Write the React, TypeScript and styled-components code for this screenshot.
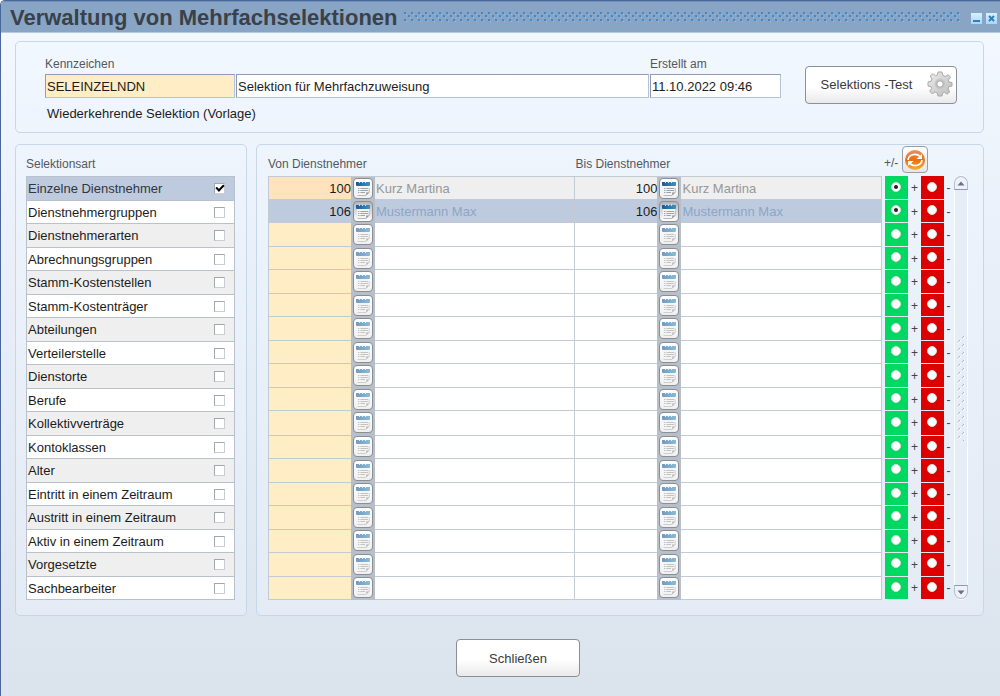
import React, { useState } from "react";
import styled, { createGlobalStyle, css } from "styled-components";

const GlobalStyle = createGlobalStyle`
  *, *::before, *::after { box-sizing: border-box; }
  html, body { margin: 0; padding: 0; }
  body, button, input { font-family: "Liberation Sans", Arial, sans-serif; font-size: 13px; }
  body { color: #1c1c1c; }
`;

const Window = styled.div`
  min-height: 100vh;
  display: flex;
  flex-direction: column;
  border-top: 1px solid #48689a;
  border-left: 1px solid #48689a;
  border-top-left-radius: 5px;
  background: linear-gradient(to bottom, #f3f8ff 32px, #eaf1fa 220px, #dde5ef 620px, #dbe3ed 100%);
`;

const TitleBar = styled.header`
  height: 32px;
  display: flex;
  align-items: center;
  padding: 2px 3px 0 9px;
  background: #89a5c5;
  border-top: 1px solid #7391b8;
  border-bottom: 1px solid #b4c9e2;
  border-top-left-radius: 4px;
`;

const Title = styled.h1`
  margin: 0;
  font-size: 22px;
  line-height: 28px;
  font-weight: bold;
  color: #3a4148;
  white-space: nowrap;
`;

const Grip = styled.svg`
  flex: 1;
  min-width: 0;
  height: 12px;
  margin: 0 6px;
`;

const WindowButton = styled.button`
  width: 11px;
  height: 11px;
  padding: 0;
  margin-left: 4px;
  border: 0;
  background: linear-gradient(#d9effc, #a9d7f3);
  display: flex;
  flex: none;
`;

const Content = styled.main`
  padding: 8px 16px 20px 14px;
  display: grid;
  grid-template-columns: 232px minmax(0, 1fr);
  column-gap: 9px;
  row-gap: 11px;
`;

const Panel = styled.section`
  border: 1px solid #c6d7ea;
  border-radius: 5px;
  background: rgba(240, 247, 255, 0.35);
`;

const HeadPanel = styled(Panel)`
  grid-column: 1 / -1;
  display: flex;
  align-items: flex-start;
  padding: 14px 26px 10px 29px;
`;

const Fields = styled.div`
  flex: 1;
  min-width: 0;
`;

const FieldRow = styled.div`
  display: grid;
  grid-template-columns: 190px minmax(0, 1fr) 131px;
  column-gap: 1px;
  row-gap: 2px;
`;

const Label = styled.label`
  font-size: 12px;
  line-height: 16px;
  color: #54585e;
`;

const TextInput = styled.input<{ $key?: boolean }>`
  grid-row: 2;
  width: 100%;
  height: 24px;
  padding: 0 1px;
  border: 1px solid #b3c3dc;
  border-top-color: #8f9cb2;
  border-left-color: #8f9cb2;
  outline: none;
  color: #1c1c1c;
  background: ${(p) => (p.$key ? "#ffedc6" : "#fff")};
`;

const Note = styled.p`
  margin: 8px 0 0 2px;
  line-height: 16px;
`;

const PushButton = styled.button<{ $w: number }>`
  width: ${(p) => p.$w}px;
  height: 38px;
  padding: 0;
  display: flex;
  align-items: center;
  justify-content: center;
  gap: 15px;
  border: 1px solid #8c8f94;
  border-radius: 4px;
  color: #3a3a3a;
  background: linear-gradient(#fff 55%, #e9e9e9);
`;

const TestButton = styled(PushButton)`
  flex: none;
  margin: 10px 0 0 24px;
  padding: 0 0 2px 12px;
`;

const Side = styled(Panel)`
  padding: 11px 11px 15px 10px;
`;

const Caption = styled.h2`
  margin: 0 0 4px;
  font-size: 12px;
  line-height: 16px;
  font-weight: normal;
  color: #54585e;
`;

const List = styled.ul`
  margin: 0;
  padding: 0;
  list-style: none;
  border: 1px solid #b9c2cc;
  border-bottom: 0;
`;

const Item = styled.li<{ $on: boolean }>`
  height: 24px;
  border-bottom: 1px solid #b9c2cc;
  background: ${(p) => (p.$on ? "#becbde" : "#fff")};
  color: ${(p) => (p.$on ? "#33373d" : "#1c1c1c")};
  &:nth-child(even) { height: 23px; }
  &:nth-child(odd) { ${(p) => !p.$on && css`background: #efefef;`} }
`;

const ItemLabel = styled.label`
  height: 100%;
  display: flex;
  align-items: center;
  justify-content: space-between;
  padding: 0 9px 0 1px;
`;

const Check = styled.input`
  appearance: none;
  width: 11px;
  height: 11px;
  margin: 0;
  border: 1px solid #c9ced6;
  border-top-color: #a3a8b0;
  border-left-color: #a3a8b0;
  background: #fff;
  display: grid;
  place-items: center;
  &:checked::before {
    content: "";
    width: 8px;
    height: 5px;
    border: solid #000;
    border-width: 0 0 2px 2px;
    transform: rotate(-45deg) translate(1px, -1px);
  }
`;

const Main = styled(Panel)`
  display: flex;
  padding: 1px 15px 15px 11px;
`;

const Grid = styled.table`
  flex: 1;
  width: 0;
  table-layout: fixed;
  border-collapse: separate;
  border-spacing: 0;
  td, th { padding: 0; }
`;

const HeadCell = styled.th`
  height: 30px;
  text-align: left;
  vertical-align: bottom;
  font-size: 12px;
  line-height: 16px;
  font-weight: normal;
  color: #54585e;
  white-space: nowrap;
`;

const HeadText = styled.span`
  display: block;
  margin-bottom: 4px;
`;

const HeadTools = styled.div`
  display: flex;
  align-items: flex-end;
  gap: 4px;
  padding: 0 0 3px 2px;
`;

const ToolsText = styled.span`
  line-height: 20px;
`;

const RefreshButton = styled.button`
  width: 26px;
  height: 27px;
  padding: 0;
  border: 1px solid #9a9da2;
  border-radius: 4px;
  background: linear-gradient(#fff, #e6e6e6);
  display: grid;
  place-items: center;
`;

type RowState = "filled" | "selected" | "empty";
const rowBg = { filled: "#efefef", selected: "#becbde", empty: "#fff" };
const keyBg = { filled: "#ffe3bd", selected: "#becbde", empty: "#ffedc6" };

const Row = styled.tr<{ $state: RowState }>`
  height: 24px;
  &:nth-child(even) { height: 23px; }
  --row: ${(p) => rowBg[p.$state]};
  --key: ${(p) => keyBg[p.$state]};
  --name: ${(p) => (p.$state === "selected" ? "#8ea5c6" : "#979797")};
`;

const Cell = styled.td`
  background: var(--row);
  border-bottom: 1px solid #c3cad3;
  white-space: nowrap;
  overflow: hidden;
  tr:first-child & { border-top: 1px solid #c3cad3; }
`;

const NumberCell = styled(Cell)<{ $key?: boolean }>`
  text-align: right;
  background: ${(p) => (p.$key ? "var(--key)" : "var(--row)")};
  ${(p) => p.$key && css`border-left: 1px solid #c3cad3;`}
`;

const PickCell = styled(Cell)`
  background: #b7c0ca;
  border-color: #b7c0ca;
`;

const NameCell = styled(Cell)`
  color: var(--name);
  border-right: 1px solid #c3cad3;
`;

const NameText = styled.span`
  padding-left: 1px;
`;

const PickButton = styled.button<{ $active: boolean }>`
  width: 20px;
  height: 21px;
  margin: 0 auto;
  padding: 0;
  display: grid;
  place-items: center;
  border: 1px solid #8b8e92;
  border-radius: 4px;
  background: ${(p) => (p.$active ? "linear-gradient(#b4b6ba, #fff)" : "linear-gradient(#fff, #f0f0f0)")};
  &:disabled svg { opacity: 0.6; }
`;

const RadioCell = styled.td<{ $color: string }>`
  background: ${(p) => p.$color};
  border-bottom: 1px solid #dfe8f2;
`;

const SignCell = styled.td`
  text-align: center;
  font-size: 12px;
  line-height: 16px;
  color: #444;
`;

const Radio = styled.input`
  appearance: none;
  display: grid;
  place-items: center;
  width: 10px;
  height: 10px;
  margin: 0 auto 2px;
  border: 1px solid #d8dcd8;
  border-radius: 50%;
  background: #fff;
  &:checked::before {
    content: "";
    width: 4px;
    height: 4px;
    border-radius: 50%;
    background: #222;
  }
`;

const ScrollTrack = styled.div`
  width: 14px;
  margin: 29px 0 0 1px;
  display: flex;
  flex-direction: column;
  align-items: center;
  justify-content: space-between;
  border-radius: 7px;
  border: 1px solid #fbfdff;
  background: #e6edf6;
`;

const ScrollButton = styled.button<{ $down?: boolean }>`
  width: 14px;
  height: 14px;
  padding: 0;
  display: grid;
  place-items: center;
  border: 1px solid #b5bfcf;
  border-radius: ${(p) => (p.$down ? "0 0 7px 7px" : "7px 7px 0 0")};
  border-${(p) => (p.$down ? "top" : "bottom")}-color: #8f9ab5;
  background: #eef2f8;
`;

const Footer = styled.footer`
  display: flex;
  justify-content: center;
  padding: 3px 0 20px 35px;
`;

const GearIcon = () => (
  <svg width="26" height="26" viewBox="-13 -13 26 26" aria-hidden="true">
    <defs>
      <linearGradient id="gear" x1="0" y1="0" x2="1" y2="1">
        <stop offset="0" stopColor="#ececec" />
        <stop offset="1" stopColor="#bcbcbc" />
      </linearGradient>
    </defs>
    <path
      d="M-2 -12 L2 -12 L3 -8.5 L5.3 -7.5 L8.2 -9.3 L10.6 -6.6 L8.3 -4 L9 -2 L12 -1.5 L12 2 L9 2.7 L8 5 L9.7 8 L7 10.2 L4.4 8.3 L2.5 9 L2 12 L-2 12 L-2.7 9 L-5 8 L-8 9.8 L-10.3 7 L-8.3 4.5 L-9 2.5 L-12 2 L-12 -2 L-9 -2.7 L-8 -5 L-9.8 -8 L-7 -10.3 L-4.5 -8.3 L-2.6 -9 Z"
      fill="url(#gear)"
      stroke="#a9a9a9"
      strokeLinejoin="round"
    />
    <circle r="5.4" fill="#c6c6c6" />
    <circle r="3.2" fill="#fff" stroke="#a4a4a4" />
  </svg>
);

const RefreshIcon = () => (
  <svg width="22" height="22" viewBox="0 0 22 22" aria-hidden="true">
    <defs>
      <linearGradient id="orb" x1="0" y1="0" x2="0" y2="1">
        <stop offset="0" stopColor="#e0936a" />
        <stop offset="0.5" stopColor="#e9700f" />
        <stop offset="1" stopColor="#fbae2e" />
      </linearGradient>
    </defs>
    <circle cx="11" cy="11" r="10" fill="url(#orb)" />
    <g fill="none" stroke="#fff" strokeWidth="1.8">
      <path d="M4 11 C4 7.5 7.5 5.4 11 5.4 C13 5.4 14.6 6 16 7.4" />
      <path d="M18 11 C18 14.5 14.5 16.6 11 16.6 C9 16.6 7.4 16 6 14.6" />
    </g>
    <path d="M18 5 V10 H12.4 Z M4 17 V12 H9.6 Z" fill="#fff" />
  </svg>
);

const PickIcon = () => (
  <svg width="16" height="17" viewBox="0 0 16 17" aria-hidden="true">
    <defs>
      <linearGradient id="band" x1="0" y1="0" x2="1" y2="0">
        <stop offset="0" stopColor="#1a5a98" />
        <stop offset="1" stopColor="#3b93c4" />
      </linearGradient>
    </defs>
    <path d="M2 5 H14 V12.5 L11 15.5 H3 Q2 15.5 2 14.5 Z" fill="#f4f4f4" />
    <path d="M1 2 H15 V5 Q15 6 14 6 H2 Q1 6 1 5 Z" fill="url(#band)" />
    <path d="M4.5 1.5 V3 M7.5 1.5 V3 M10.5 1.5 V3" stroke="#cfe4f2" />
    <path d="M3 8.5 H4.4 M5.4 8.5 H13 M3 10.5 H4.4 M5.4 10.5 H13 M3 12.5 H4.4 M5.4 12.5 H10" stroke="#a2a2a2" />
    <path d="M2.5 15.5 H11 L14.2 12.3 V8" fill="none" stroke="#b9b9b9" />
    <path d="M10.8 15.5 Q11.8 14 11.2 12.2 Q13 13 14.3 12.2 Z" fill="#8b8b8b" />
  </svg>
);

const Arrow = ({ down }: { down?: boolean }) => (
  <svg width="8" height="5" viewBox="0 0 8 5" aria-hidden="true">
    <path d={down ? "M0.5 0.5 H7.5 L4 4.5 Z" : "M0.5 4.5 H7.5 L4 0.5 Z"} fill="#6c6c92" />
  </svg>
);

const ScrollGrip = () => (
  <svg width="12" height="106" aria-hidden="true">
    <defs>
      <pattern id="scrollDots" width="12" height="8" patternUnits="userSpaceOnUse">
        <path d="M3 7 L5 5 M7 3 L9 1" stroke="#a9b8cc" strokeWidth="1" />
        <path d="M4 8 L6 6 M8 4 L10 2" stroke="#fff" strokeWidth="1" />
      </pattern>
    </defs>
    <rect width="12" height="106" fill="url(#scrollDots)" />
  </svg>
);

const kinds = [
  "Einzelne Dienstnehmer", "Dienstnehmergruppen", "Dienstnehmerarten", "Abrechnungsgruppen",
  "Stamm-Kostenstellen", "Stamm-Kostenträger", "Abteilungen", "Verteilerstelle", "Dienstorte",
  "Berufe", "Kollektivverträge", "Kontoklassen", "Alter", "Eintritt in einem Zeitraum",
  "Austritt in einem Zeitraum", "Aktiv in einem Zeitraum", "Vorgesetzte", "Sachbearbeiter",
];

interface Entry { no: string; name: string; state: RowState }

const entries: Entry[] = [
  { no: "100", name: "Kurz Martina", state: "filled" },
  { no: "106", name: "Mustermann Max", state: "selected" },
  ...Array.from({ length: 16 }, (): Entry => ({ no: "", name: "", state: "empty" })),
];

const Range = ({ entry, first }: { entry: Entry; first?: boolean }) => (
  <>
    <NumberCell $key={first}>{entry.no}</NumberCell>
    <PickCell>
      <PickButton
        type="button"
        aria-label="Dienstnehmer auswählen"
        $active={entry.state === "selected"}
        disabled={entry.state === "empty"}
      >
        <PickIcon />
      </PickButton>
    </PickCell>
    <NameCell><NameText>{entry.name}</NameText></NameCell>
  </>
);

export default function App() {
  const [active, setActive] = useState(0);
  return (
    <>
      <GlobalStyle />
      <Window>
        <TitleBar>
          <Title>Verwaltung von Mehrfachselektionen</Title>
          <Grip aria-hidden="true">
            <defs>
              <pattern id="titleDots" width="7" height="12" patternUnits="userSpaceOnUse">
                <g fill="#4389c8">
                  <rect x="0" y="0" width="2" height="2" />
                  <rect x="4" y="3" width="2" height="2" />
                  <rect x="0" y="7" width="2" height="2" />
                </g>
                <g fill="#9dbbd9">
                  <rect x="2" y="2" width="1" height="1" />
                  <rect x="6" y="5" width="1" height="1" />
                  <rect x="2" y="9" width="1" height="1" />
                </g>
              </pattern>
            </defs>
            <rect width="100%" height="12" fill="url(#titleDots)" />
          </Grip>
          <WindowButton type="button" aria-label="Minimieren">
            <svg width="11" height="11" aria-hidden="true"><path d="M2 8 H9" stroke="#2c7fbf" strokeWidth="2" /></svg>
          </WindowButton>
          <WindowButton type="button" aria-label="Fenster schließen">
            <svg width="11" height="11" aria-hidden="true"><path d="M3 3 L8 8 M8 3 L3 8" stroke="#2c7fbf" strokeWidth="2" /></svg>
          </WindowButton>
        </TitleBar>

        <Content>
          <HeadPanel>
            <Fields>
              <FieldRow>
                <Label htmlFor="key">Kennzeichen</Label>
                <span />
                <Label htmlFor="created">Erstellt am</Label>
                <TextInput id="key" $key defaultValue="SELEINZELNDN" />
                <TextInput aria-label="Bezeichnung" defaultValue="Selektion für Mehrfachzuweisung" />
                <TextInput id="created" defaultValue="11.10.2022 09:46" />
              </FieldRow>
              <Note>Wiederkehrende Selektion (Vorlage)</Note>
            </Fields>
            <TestButton type="button" $w={152}>
              Selektions -Test
              <GearIcon />
            </TestButton>
          </HeadPanel>

          <Side>
            <Caption>Selektionsart</Caption>
            <List>
              {kinds.map((kind, i) => (
                <Item key={kind} $on={i === active}>
                  <ItemLabel>
                    {kind}
                    <Check type="checkbox" checked={i === active} onChange={() => setActive(i)} />
                  </ItemLabel>
                </Item>
              ))}
            </List>
          </Side>

          <Main>
            <Grid>
              <colgroup>
                <col style={{ width: 83 }} />
                <col style={{ width: 24 }} />
                <col style={{ width: "auto" }} />
                <col style={{ width: 82 }} />
                <col style={{ width: 24 }} />
                <col style={{ width: "auto" }} />
                <col style={{ width: 3 }} />
                <col style={{ width: 23 }} />
                <col style={{ width: 13 }} />
                <col style={{ width: 23 }} />
                <col style={{ width: 9 }} />
              </colgroup>
              <thead>
                <tr>
                  <HeadCell colSpan={3}><HeadText>Von Dienstnehmer</HeadText></HeadCell>
                  <HeadCell colSpan={3}><HeadText>Bis Dienstnehmer</HeadText></HeadCell>
                  <HeadCell colSpan={5}>
                    <HeadTools>
                      <ToolsText>+/-</ToolsText>
                      <RefreshButton type="button" aria-label="Aktualisieren"><RefreshIcon /></RefreshButton>
                    </HeadTools>
                  </HeadCell>
                </tr>
              </thead>
              <tbody>
                {entries.map((entry, i) => (
                  <Row key={i} $state={entry.state}>
                    <Range entry={entry} first />
                    <Range entry={entry} />
                    <td />
                    <RadioCell $color="#00d862">
                      <Radio type="radio" name={`sign-${i}`} id={`plus-${i}`} defaultChecked={entry.no !== ""} />
                    </RadioCell>
                    <SignCell><label htmlFor={`plus-${i}`}>+</label></SignCell>
                    <RadioCell $color="#dc0000">
                      <Radio type="radio" name={`sign-${i}`} id={`minus-${i}`} />
                    </RadioCell>
                    <SignCell><label htmlFor={`minus-${i}`}>-</label></SignCell>
                  </Row>
                ))}
              </tbody>
            </Grid>
            <ScrollTrack>
              <ScrollButton type="button" aria-label="Nach oben"><Arrow /></ScrollButton>
              <ScrollGrip />
              <ScrollButton type="button" aria-label="Nach unten" $down><Arrow down /></ScrollButton>
            </ScrollTrack>
          </Main>
        </Content>

        <Footer>
          <PushButton type="button" $w={124}>Schließen</PushButton>
        </Footer>
      </Window>
    </>
  );
}
